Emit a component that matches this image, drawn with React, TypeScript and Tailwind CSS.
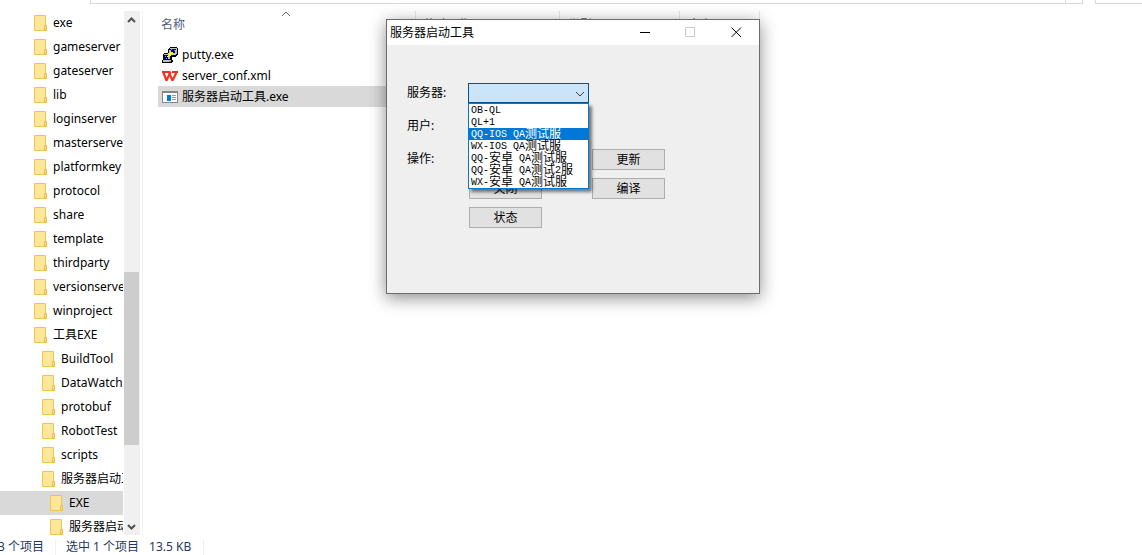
import { useState, type ReactNode } from "react"

type Folder = { name: string; level: number }

const folders: Folder[] = [
  { name: "exe", level: 0 },
  { name: "gameserver", level: 0 },
  { name: "gateserver", level: 0 },
  { name: "lib", level: 0 },
  { name: "loginserver", level: 0 },
  { name: "masterserver", level: 0 },
  { name: "platformkey", level: 0 },
  { name: "protocol", level: 0 },
  { name: "share", level: 0 },
  { name: "template", level: 0 },
  { name: "thirdparty", level: 0 },
  { name: "versionserver", level: 0 },
  { name: "winproject", level: 0 },
  { name: "工具EXE", level: 0 },
  { name: "BuildTool", level: 1 },
  { name: "DataWatch", level: 1 },
  { name: "protobuf", level: 1 },
  { name: "RobotTest", level: 1 },
  { name: "scripts", level: 1 },
  { name: "服务器启动工具", level: 1 },
  { name: "EXE", level: 2 },
  { name: "服务器启动工具", level: 2 },
]

const indents = ["pl-8", "pl-10", "pl-12"]

const servers = [
  "OB-QL",
  "QL+1",
  "QQ-IOS QA测试服",
  "WX-IOS QA测试服",
  "QQ-安卓 QA测试服",
  "QQ-安卓 QA测试2服",
  "WX-安卓 QA测试服",
]

function FolderIcon() {
  return (
    <svg className="h-4 w-4 shrink-0" viewBox="0 0 16 16" aria-hidden="true">
      <path d="M2.5 0.5h11v15h-11z" fill="#ffe698" stroke="#efc84a" />
      <path d="M12.5 10.5h2v5h-2z" fill="#ffe080" stroke="#e8bf3f" />
    </svg>
  )
}

function PuttyIcon() {
  return (
    <svg className="h-4 w-4" viewBox="0 0 16 16" shapeRendering="crispEdges" aria-hidden="true">
      <path d="M8 0h7v1h1v7h-1v1h-1v1H7V9H6V2h1V1h1z" fill="#000" />
      <path d="M8 1h7v6h-1V2H8zM7 3h7v5H7z" fill="#c0c0c0" />
      <path d="M9 2h4v4H9z" fill="#000080" />
      <path d="M9 2h1v1H9zM12 3h1v1h-1z" fill="#8080ff" />
      <path d="M2 6h7v1h1v6h1v2h-1v1H0v-3h1V7h1z" fill="#000" />
      <path d="M2 7h6v5H2zM1 13h8v2H1z" fill="#c0c0c0" />
      <path d="M2 8h4v4H2z" fill="#000080" />
      <path d="M3 9h1v1H3zM4 11h1v1H4z" fill="#8080ff" />
      <path d="M7 14h2v1H7z" fill="#808080" />
      <path d="M10 5h1v1h-1v1h1v1H9v1H7v1H5V9h1V8h1V7H6V6h2V5z" fill="#ffff00" />
    </svg>
  )
}

function WpsIcon() {
  return (
    <svg className="h-4 w-4" viewBox="0 0 16 16" fill="none" stroke="#f5321e" aria-hidden="true">
      <path d="M0 4h8.5M10 4h6" strokeWidth="2" />
      <path d="M1.2 4l3.3 8.5 4-8.5" strokeWidth="2.2" strokeLinejoin="bevel" />
      <path d="M7.2 5l3.3 7.5 4.2-8.5" strokeWidth="2.2" strokeLinejoin="bevel" />
    </svg>
  )
}

function AppIcon() {
  return (
    <svg className="h-4 w-4" viewBox="0 0 16 16" shapeRendering="crispEdges" aria-hidden="true">
      <path d="M0 2h16v12H0z" fill="#868686" />
      <path d="M1 4h14v9H1z" fill="#fff" />
      <path d="M5 6h4v6H5z" fill="#0078d7" />
      <path d="M10 6h4v1h-4zM10 8h4v1h-4zM10 10h4v1h-4z" fill="#999" />
    </svg>
  )
}

function ScrollArrow({ down = false }: { down?: boolean }) {
  return (
    <svg className="h-4 w-4" viewBox="0 0 16 16" fill="none" stroke="#505050" strokeWidth="2" aria-hidden="true">
      <path d={down ? "M4 6l3.5 3.5L11 6" : "M4 11l3.5-3.5L11 11"} />
    </svg>
  )
}

function Sidebar() {
  const [selected, setSelected] = useState(20)

  return (
    <nav className="flex w-[143px] shrink-0 border-r border-[#f3f3f3]">
      <ul className="min-w-0 flex-1 overflow-hidden">
        {folders.map((folder, i) => (
          <li key={i}>
            <button
              type="button"
              onClick={() => setSelected(i)}
              className={`flex h-6 w-full items-center gap-[5px] whitespace-nowrap ${indents[folder.level]} ${
                i === selected ? "bg-[#d9d9d9]" : ""
              }`}
            >
              <FolderIcon />
              <span>{folder.name}</span>
            </button>
          </li>
        ))}
      </ul>
      <div className="ml-px mr-[2px] flex w-4 flex-col bg-[#f0f0f0]">
        <button type="button" aria-label="向上滚动" className="h-4">
          <ScrollArrow />
        </button>
        <div className="flex flex-1 flex-col">
          <div className="grow-[245]" />
          <div className="mr-px grow-[173] bg-[#cdcdcd]" />
          <div className="grow-[74]" />
        </div>
        <button type="button" aria-label="向下滚动" className="h-4">
          <ScrollArrow down />
        </button>
      </div>
    </nav>
  )
}

function FileRow({ icon, name, selected = false }: { icon: ReactNode; name: string; selected?: boolean }) {
  return (
    <tr className={`h-[21px] ${selected ? "bg-[#d9d9d9]" : ""}`}>
      <td className="p-0 pl-1" colSpan={4}>
        <div className="flex items-center gap-1">
          {icon}
          <span>{name}</span>
        </div>
      </td>
    </tr>
  )
}

function FileList() {
  return (
    <main className="min-w-0 flex-1 overflow-hidden pl-[15px]">
      <table className="w-[602px] table-fixed border-separate border-spacing-0">
        <thead>
          <tr className="h-[26px] text-left text-[#4c607a]">
            <th className="relative w-[258px] border-r border-[#e5e5e5] p-0 pl-[3px] pt-[2px] font-normal">
              名称
              <svg
                className="absolute left-[123px] top-0 h-[6px] w-[10px]"
                viewBox="0 0 10 6"
                fill="none"
                stroke="#6d6d6d"
                aria-hidden="true"
              >
                <path d="M1 5l4-4 4 4" />
              </svg>
            </th>
            <th className="w-36 border-r border-[#e5e5e5] p-0 pl-2 pt-[2px] font-normal">修改日期</th>
            <th className="w-[120px] border-r border-[#e5e5e5] p-0 pl-2 pt-[2px] font-normal">类型</th>
            <th className="border-r border-[#e5e5e5] p-0 pl-2 pt-[2px] font-normal">大小</th>
          </tr>
        </thead>
        <tbody>
          <tr className="h-[7px]" />
          <FileRow icon={<PuttyIcon />} name="putty.exe" />
          <FileRow icon={<WpsIcon />} name="server_conf.xml" />
          <FileRow icon={<AppIcon />} name="服务器启动工具.exe" selected />
        </tbody>
      </table>
    </main>
  )
}

// Latin runs are half the width of a Chinese character
function PixelText({ text }: { text: string }) {
  return (
    <>
      {text.split(/([\u4e00-\u9fff]+)/).map((part, i) => (
        <span key={i} className={i % 2 ? "text-[12px]" : "text-[10px]"}>
          {part}
        </span>
      ))}
    </>
  )
}

function ServerSelect() {
  const [open, setOpen] = useState(true)
  const [active, setActive] = useState(2)

  return (
    <div className="relative w-[121px]">
      <select
        id="server"
        onMouseDown={(e) => {
          e.preventDefault()
          setOpen(!open)
        }}
        className="block h-5 w-full appearance-none border border-[#00549a] bg-[#cce4f7]"
      >
        <option value="" />
      </select>
      <svg
        className="pointer-events-none absolute right-1 top-2 h-[6px] w-[10px]"
        viewBox="0 0 10 6"
        fill="none"
        stroke="#404040"
        aria-hidden="true"
      >
        <path d="M1 1l4 4 4-4" />
      </svg>
      {open && (
        <ul
          role="listbox"
          aria-label="服务器"
          className="absolute left-0 top-full z-10 w-full border border-[#0078d7] bg-white font-['Liberation_Mono','Noto_Sans_CJK_SC',monospace] shadow-[3px_3px_3px_rgba(0,0,0,0.5)]"
        >
          {servers.map((server, i) => (
            <li
              key={server}
              role="option"
              aria-selected={i === active}
              onMouseEnter={() => setActive(i)}
              className={`flex h-3 items-center whitespace-pre pl-[2px] pt-[2px] leading-3 ${
                i === active ? "bg-[#0078d7] text-white" : ""
              }`}
            >
              <PixelText text={server} />
            </li>
          ))}
        </ul>
      )}
    </div>
  )
}

function ActionButton({ children, className = "" }: { children: ReactNode; className?: string }) {
  return (
    <button type="button" className={`h-[21px] w-[73px] border border-[#adadad] bg-[#e1e1e1] leading-none ${className}`}>
      {children}
    </button>
  )
}

function ToolWindow() {
  return (
    <section className="absolute left-[386px] top-[19px] flex h-[275px] w-[374px] flex-col border border-[#6b6b6b] bg-[#efefef] text-black shadow-[0_4px_16px_rgba(0,0,0,0.45)]">
      <header className="flex h-[25px] items-center bg-white pl-[3px]">
        <h1 className="flex-1">服务器启动工具</h1>
        <button type="button" aria-label="最小化" className="flex h-full w-[45px] items-center justify-center">
          <svg className="h-[11px] w-[11px]" viewBox="0 0 11 11" stroke="#000">
            <path d="M0 5.5h10" />
          </svg>
        </button>
        <button type="button" aria-label="最大化" disabled className="flex h-full w-[45px] items-center justify-center">
          <svg className="h-[11px] w-[11px]" viewBox="0 0 11 11" fill="none" stroke="#ccc">
            <path d="M0.5 0.5h9v9h-9z" />
          </svg>
        </button>
        <button type="button" aria-label="关闭窗口" className="flex h-full w-[46px] items-center justify-center">
          <svg className="h-[11px] w-[11px]" viewBox="0 0 11 11" stroke="#000">
            <path d="M0.5 0.5l9.5 9.5M10 0.5l-9.5 9.5" />
          </svg>
        </button>
      </header>
      <form className="flex flex-col gap-[13px] pl-5 pt-[38px]">
        <div className="flex h-5 items-center">
          <label htmlFor="server" className="w-[61px]">
            服务器:
          </label>
          <ServerSelect />
        </div>
        <div className="flex h-5 items-center">用户:</div>
        <div className="flex items-start">
          <span className="flex h-5 w-[62px] items-center">操作:</span>
          <div className="grid grid-cols-[73px_73px] gap-x-[50px] gap-y-2">
            <ActionButton className="col-start-2">更新</ActionButton>
            <ActionButton>关闭</ActionButton>
            <ActionButton>编译</ActionButton>
            <ActionButton>状态</ActionButton>
          </div>
        </div>
      </form>
    </section>
  )
}

export default function App() {
  return (
    <div className="relative flex h-screen flex-col overflow-hidden bg-white font-['Noto_Sans','Noto_Sans_CJK_SC',sans-serif] text-[12px] leading-4 text-black">
      <div className="flex h-[11px] shrink-0 items-start gap-3 pl-[90px]">
        <div className="flex h-1 flex-1 justify-end border-x border-b border-[#d9d9d9]">
          <div className="w-[17px] border-l border-[#d9d9d9]" />
        </div>
        <div className="h-1 w-[47px] border-b border-l border-[#d9d9d9]" />
      </div>
      <div className="flex min-h-0 flex-1 overflow-hidden">
        <Sidebar />
        <FileList />
      </div>
      <footer className="flex h-5 shrink-0 items-center overflow-hidden whitespace-nowrap pt-1 text-[#1e395b]">
        <span className="-ml-[2px] w-[58px] border-r border-[#f0f0f0]">3 个项目</span>
        <span className="pl-[10px]">选中 1 个项目</span>
        <span className="border-r border-[#f0f0f0] pl-[10px] pr-3">13.5 KB</span>
      </footer>
      <ToolWindow />
    </div>
  )
}
